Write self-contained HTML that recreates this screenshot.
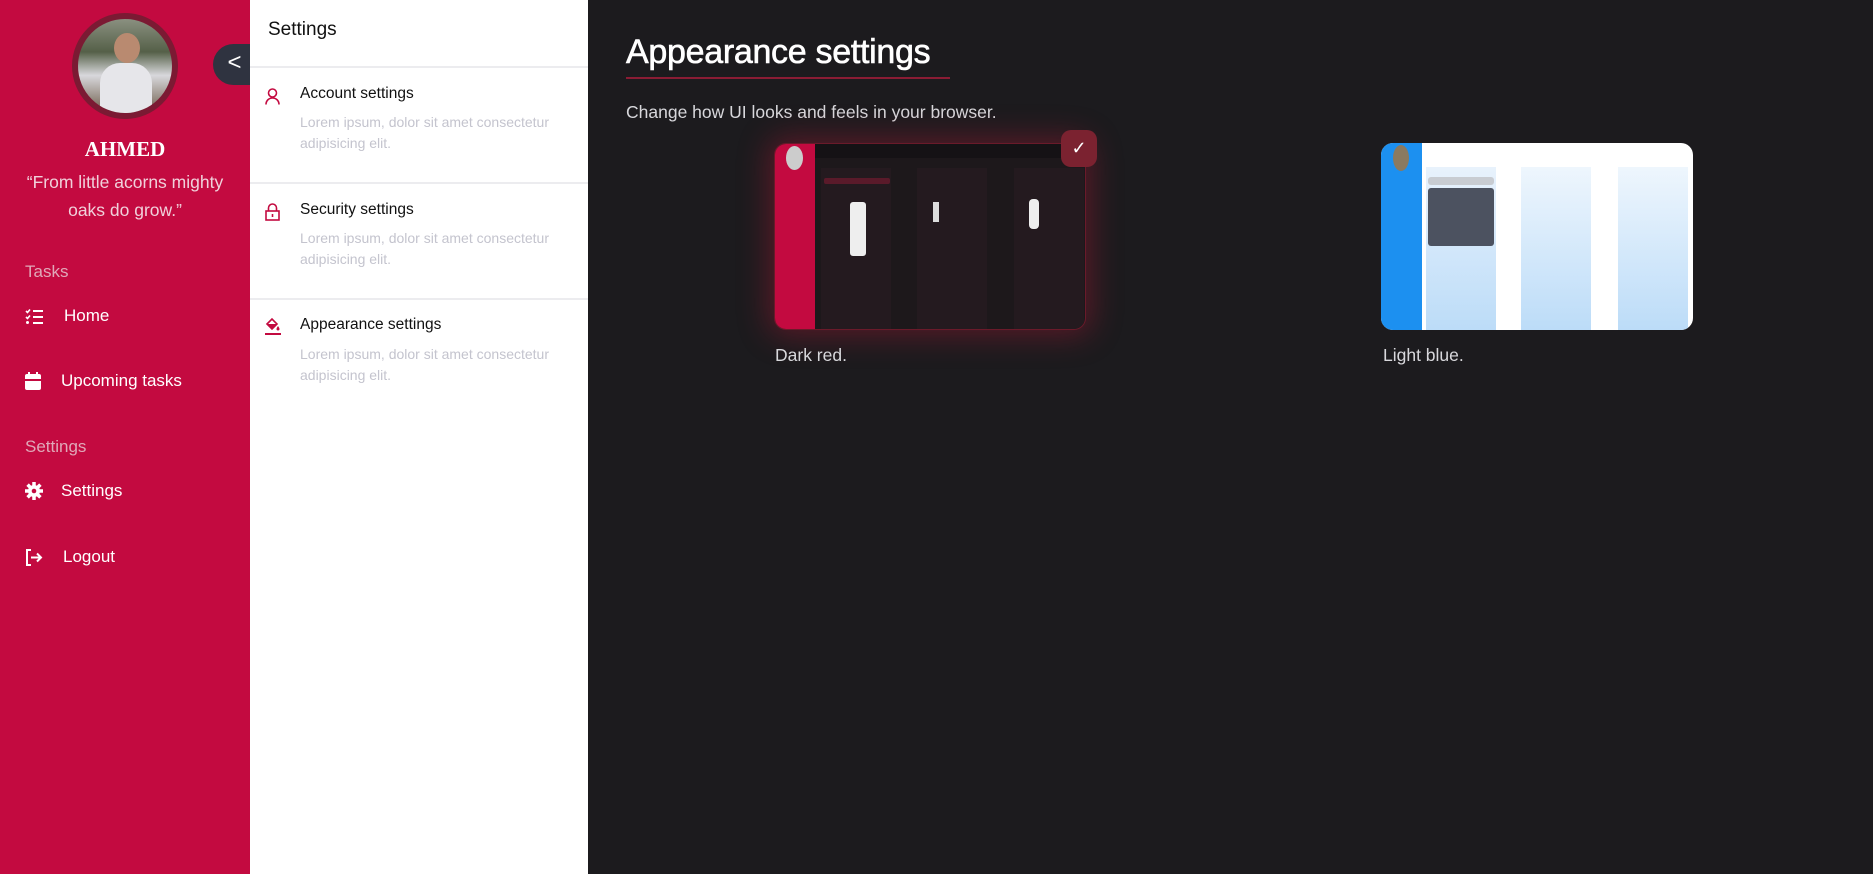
<!DOCTYPE html>
<html><head><meta charset="utf-8"><style>
*{margin:0;padding:0;box-sizing:border-box}
body{width:1873px;height:874px;overflow:hidden;background:#1c1b1e;font-family:"Liberation Sans",sans-serif;position:relative}
.abs{position:absolute}
#sb{left:0;top:0;width:250px;height:874px;background:#c30a40;color:#fff}
.nav{position:absolute;left:25px;font-size:17px;color:#fff;display:flex;align-items:center}
.nav svg{margin-right:20px}
.lbl{position:absolute;left:25px;font-size:17px;color:#e0a8b8}
#sp{left:250px;top:0;width:338px;height:874px;background:#fff}
.it{position:absolute;left:0;width:338px;border-top:2px solid #ececef}
.it .t{position:absolute;left:50px;font-size:15.5px;color:#111}
.it .d{position:absolute;left:50px;font-size:14px;color:#c4c4ce;line-height:21px;width:270px}
.it svg{position:absolute;left:15px}
.card{position:absolute;top:143px;width:312px;height:187px;border-radius:12px;overflow:hidden}
</style></head><body>
<div id="sb" class="abs">
 <div class="abs" style="left:72px;top:13px;width:106px;height:106px;border-radius:50%;background:#7b1a33;"></div>
 <div class="abs" style="left:78px;top:19px;width:94px;height:94px;border-radius:50%;background:linear-gradient(180deg,#8a9080 0%,#556048 35%,#d8d8dc 60%,#6c5a48 100%);overflow:hidden">
  <div class="abs" style="left:36px;top:14px;width:26px;height:30px;border-radius:50%;background:#b98a70"></div>
  <div class="abs" style="left:22px;top:44px;width:52px;height:50px;border-radius:20px 20px 0 0;background:#e6e6ea"></div>
 </div>
 <div class="abs" style="left:0;top:137px;width:250px;text-align:center;font-family:'Liberation Serif',serif;font-weight:bold;font-size:21px">AHMED</div>
 <div class="abs" style="left:10px;top:168px;width:230px;text-align:center;font-size:17.5px;line-height:28px;color:#f0d0da">“From little acorns mighty oaks do grow.”</div>
 <div class="lbl" style="top:262px">Tasks</div>
 <div class="nav" style="top:306px"><svg width="19" height="17" viewBox="0 0 19 17" fill="#fff"><path d="M1 3l1.5 1.5L5 1.5" stroke="#fff" stroke-width="1.6" fill="none"/><rect x="8" y="2" width="10" height="2"/><path d="M1 9l1.5 1.5L5 7.5" stroke="#fff" stroke-width="1.6" fill="none"/><rect x="8" y="8" width="10" height="2"/><circle cx="2.5" cy="14.5" r="1.5"/><rect x="8" y="14" width="10" height="2"/></svg><span>Home</span></div>
 <div class="nav" style="top:371px"><svg width="16" height="18" viewBox="0 0 16 18" fill="#fff"><rect x="3" y="0" width="2" height="4"/><rect x="11" y="0" width="2" height="4"/><path d="M0 4a2 2 0 012-2h12a2 2 0 012 2v3H0z"/><path d="M0 9h16v7a2 2 0 01-2 2H2a2 2 0 01-2-2z"/></svg>Upcoming tasks</div>
 <div class="lbl" style="top:437px">Settings</div>
 <div class="nav" style="top:481px"><svg width="18" height="18" viewBox="0 0 18 18"><circle cx="9" cy="9" r="6" fill="#fff"/><g stroke="#fff" stroke-width="3.5"><path d="M9 0v18M0 9h18M2.6 2.6l12.8 12.8M15.4 2.6L2.6 15.4"/></g><circle cx="9" cy="9" r="2.3" fill="#c30a40"/></svg><span style="margin-left:-2px">Settings</span></div>
 <div class="nav" style="top:547px"><svg width="18" height="17" viewBox="0 0 18 17" fill="none" stroke="#fff" stroke-width="2"><path d="M6 1H2v15h4"/><path d="M6 8.5h10M12 4.5l4 4-4 4"/></svg><span>Logout</span></div>
</div>
<div class="abs" style="left:213px;top:44px;width:37px;height:41px;background:#2f3340;border-radius:21px 0 0 21px;color:#fff;font-size:24px;line-height:38px;text-align:center;padding-left:6px">&lt;</div>
<div id="sp" class="abs">
 <div class="abs" style="left:18px;top:19px;font-size:19px;color:#111">Settings</div>
 <div class="it" style="top:66px;height:118px">
  <svg style="top:20px" width="15" height="17" viewBox="0 0 15 17" fill="none" stroke="#c30a40" stroke-width="1.6"><circle cx="7.5" cy="5" r="4"/><path d="M1 16.5c0-4 3-6.5 6.5-6.5s6.5 2.5 6.5 6.5"/></svg>
  <div class="t" style="top:17px">Account settings</div>
  <div class="d" style="top:44px">Lorem ipsum, dolor sit amet consectetur adipisicing elit.</div></div>
 <div class="it" style="top:182px;height:118px">
  <svg style="top:19px" width="15" height="18" viewBox="0 0 15 18" fill="none" stroke="#c30a40" stroke-width="1.6"><rect x="1" y="8" width="13" height="9"/><path d="M3.5 8V5a4 4 0 018 0v3"/><path d="M7.5 11v3"/></svg>
  <div class="t" style="top:17px">Security settings</div>
  <div class="d" style="top:44px">Lorem ipsum, dolor sit amet consectetur adipisicing elit.</div></div>
 <div class="it" style="top:298px;height:117px">
  <svg style="top:17px" width="16" height="18" viewBox="0 0 16 18" fill="#c30a40"><path d="M2 7l5-5 5 5-5 5z" fill="none" stroke="#c30a40" stroke-width="1.6"/><path d="M2 7h10l-5 5z"/><path d="M13 9c1 1.5 1.5 2.3 1.5 3a1.5 1.5 0 01-3 0c0-.7.5-1.5 1.5-3z"/><rect x="0" y="16" width="16" height="2"/></svg>
  <div class="t" style="top:16px">Appearance settings</div>
  <div class="d" style="top:44px">Lorem ipsum, dolor sit amet consectetur adipisicing elit.</div></div>
</div>
<div class="abs" style="left:626px;top:33px;font-size:34px;color:#fff;letter-spacing:-0.3px;-webkit-text-stroke:0.6px #fff">Appearance settings</div>
<div class="abs" style="left:626px;top:77px;width:324px;height:2px;background:#8a1c34"></div>
<div class="abs" style="left:626px;top:102px;font-size:17.5px;color:#d8d8dc">Change how UI looks and feels in your browser.</div>

<div class="card" style="left:774px;box-shadow:0 0 30px 6px rgba(160,25,50,.45);border:1px solid #6a1a2a;background:#1d181b">
 <div class="abs" style="left:0;top:0;width:40px;height:187px;background:#c30a40"></div>
 <div class="abs" style="left:11px;top:2px;width:17px;height:24px;border-radius:50%;background:#ccc"></div>
 <div class="abs" style="left:40px;top:0;width:272px;height:14px;background:#151215"></div>
 <div class="abs" style="left:46px;top:24px;width:70px;height:163px;background:#241a1f"></div>
 <div class="abs" style="left:49px;top:34px;width:66px;height:6px;background:#5a1a2a;border-radius:2px"></div>
 <div class="abs" style="left:142px;top:24px;width:70px;height:163px;background:#241a1f"></div>
 <div class="abs" style="left:239px;top:24px;width:70px;height:163px;background:#241a1f"></div>
 <div class="abs" style="left:75px;top:58px;width:16px;height:54px;background:#eee;border-radius:3px"></div>
 <div class="abs" style="left:158px;top:58px;width:6px;height:20px;background:#ddd"></div>
 <div class="abs" style="left:254px;top:55px;width:10px;height:30px;background:#eee;border-radius:4px"></div>
</div>
<div class="abs" style="left:1061px;top:130px;width:36px;height:37px;background:#7b2230;border-radius:10px;color:#fff;text-align:center;font-size:18px;line-height:37px">✓</div>
<div class="abs" style="left:775px;top:345px;font-size:17.5px;color:#d8d8dc">Dark red.</div>

<div class="card" style="left:1381px;background:#fff">
 <div class="abs" style="left:0;top:0;width:41px;height:187px;background:#1c90f0"></div>
 <div class="abs" style="left:12px;top:2px;width:16px;height:26px;border-radius:50%;background:#8a7a60"></div>
 <div class="abs" style="left:45px;top:24px;width:70px;height:163px;background:linear-gradient(#e8f2fc,#bcdcf8)"></div>
 <div class="abs" style="left:47px;top:34px;width:66px;height:8px;background:#c8ccd2;border-radius:3px"></div>
 <div class="abs" style="left:47px;top:45px;width:66px;height:58px;background:#4c5260;border-radius:3px"></div>
 <div class="abs" style="left:140px;top:24px;width:70px;height:163px;background:linear-gradient(#eef6fd,#bcdcf8)"></div>
 <div class="abs" style="left:237px;top:24px;width:70px;height:163px;background:linear-gradient(#eef6fd,#bcdcf8)"></div>
</div>
<div class="abs" style="left:1383px;top:345px;font-size:17.5px;color:#d8d8dc">Light blue.</div>
</body></html>
